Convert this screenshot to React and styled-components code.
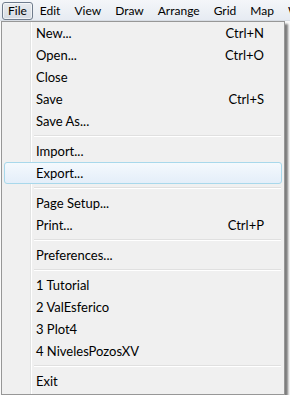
import styled, { createGlobalStyle } from "styled-components";

const Global = createGlobalStyle`
  html, body { margin: 0; padding: 0; background: #ffffff; }
  body { font-family: "Lato", "Open Sans", sans-serif; font-size: 12.5px; color: #000; }
`;

const Screen = styled.div`
  width: 290px;
  height: 402px;
  overflow: hidden;
  display: flex;
  flex-direction: column;
  background: #fafafa;
`;

const MenuBar = styled.div`
  display: flex;
  align-items: center;
  height: 21px;
  padding: 1px 0 0 2px;
  background: linear-gradient(#f4f6f9, #e6ebf2);
  border-bottom: 1px solid #d8dde4;
  box-sizing: border-box;
  white-space: nowrap;
`;

const BarItem = styled.div`
  height: 18px;
  line-height: 16px;
  padding: 0 ${(p) => p.$pad || 6}px;
  box-sizing: border-box;
  border: 1px solid ${(p) => (p.$open ? "#6f7c8d" : "transparent")};
  border-radius: 3px;
  background: ${(p) => (p.$open ? "linear-gradient(#e8ebef, #d5dbe3)" : "transparent")};
  box-shadow: ${(p) => (p.$open ? "inset 0 0 0 1px rgba(255,255,255,0.6)" : "none")};
  font-size: 12px;
`;

const Dropdown = styled.div`
  margin-left: 1px;
  width: 284px;
  background: #f0f0f0;
  border: 1px solid #979797;
  box-shadow: 3px 3px 2px rgba(0, 0, 0, 0.5);
  padding: 0 2px 2px 2px;
  box-sizing: border-box;
  display: flex;
  flex-direction: column;
  background-image: linear-gradient(
    to right,
    transparent 28px,
    #e2e3e3 28px,
    #e2e3e3 29px,
    #ffffff 29px,
    #ffffff 30px,
    transparent 30px
  );
`;

const Item = styled.div`
  display: flex;
  justify-content: space-between;
  align-items: center;
  height: 22px;
  padding: 0 17px 0 31px;
  box-sizing: border-box;
  font-size: 13px;
  border: 1px solid ${(p) => (p.$hover ? "#a8d8eb" : "transparent")};
  border-radius: 3px;
  background: ${(p) =>
    p.$hover ? "linear-gradient(#f4f9fd, #e4eef9)" : "transparent"};
`;

const Shortcut = styled.span``;

const Separator = styled.div`
  height: 2px;
  margin: 3px 1px 3px 30px;
  border-top: 1px solid #e0e0e0;
  border-bottom: 1px solid #ffffff;
  box-sizing: border-box;
`;

const Behind = styled.div`
  flex: 1;
  background: #ffffff;
`;

const bar = [
  ["File", true, 5],
  ["Edit", false, 6],
  ["View", false, 6],
  ["Draw", false, 6],
  ["Arrange", false, 6],
  ["Grid", false, 6],
  ["Map", false, 6],
  ["Window", false, 6],
];

const menu = [
  ["New...", "Ctrl+N"],
  ["Open...", "Ctrl+O"],
  ["Close"],
  ["Save", "Ctrl+S"],
  ["Save As..."],
  "-",
  ["Import..."],
  ["Export...", null, true],
  "-",
  ["Page Setup..."],
  ["Print...", "Ctrl+P"],
  "-",
  ["Preferences..."],
  "-",
  ["1 Tutorial"],
  ["2 ValEsferico"],
  ["3 Plot4"],
  ["4 NivelesPozosXV"],
  "-",
  ["Exit"],
];

export default function App() {
  return (
    <Screen>
      <Global />
      <MenuBar>
        {bar.map(([label, open, pad]) => (
          <BarItem key={label} $open={open} $pad={pad}>
            {label}
          </BarItem>
        ))}
      </MenuBar>
      <Dropdown>
        {menu.map((m, i) =>
          m === "-" ? (
            <Separator key={i} />
          ) : (
            <Item key={i} $hover={m[2]}>
              <span>{m[0]}</span>
              {m[1] && <Shortcut>{m[1]}</Shortcut>}
            </Item>
          )
        )}
      </Dropdown>
      <Behind />
    </Screen>
  );
}
